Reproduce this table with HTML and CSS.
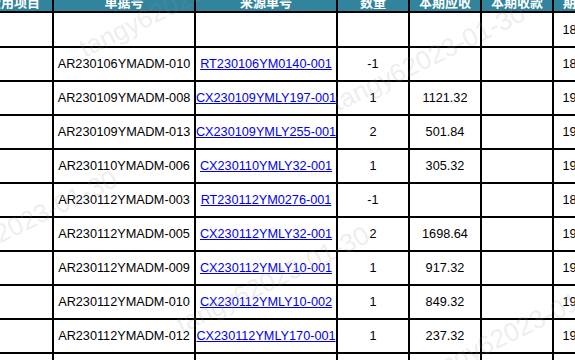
FILE: index.html
```html
<!DOCTYPE html>
<html lang="zh-CN">
<head>
<meta charset="utf-8">
<title>单据明细</title>
<link rel="stylesheet" href="styles.css">
</head>
<body>
<div class="sheet">
  <div class="grid">
    <div class="cell head">费用项目</div>
    <div class="cell head">单据号</div>
    <div class="cell head">来源单号</div>
    <div class="cell head">数量</div>
    <div class="cell head">本期应收</div>
    <div class="cell head">本期收款</div>
    <div class="cell head">期末余额</div>

    <div class="cell first"></div><div class="cell first"></div><div class="cell first"></div><div class="cell first"></div><div class="cell first"></div><div class="cell first"></div><div class="cell first">18962.40</div>

    <div class="cell"></div><div class="cell">AR230106YMADM-010</div><div class="cell"><a href="#">RT230106YM0140-001</a></div><div class="cell">-1</div><div class="cell"></div><div class="cell"></div><div class="cell">18451.20</div>

    <div class="cell"></div><div class="cell">AR230109YMADM-008</div><div class="cell"><a href="#">CX230109YMLY197-001</a></div><div class="cell">1</div><div class="cell">1121.32</div><div class="cell"></div><div class="cell">19572.52</div>

    <div class="cell"></div><div class="cell">AR230109YMADM-013</div><div class="cell"><a href="#">CX230109YMLY255-001</a></div><div class="cell">2</div><div class="cell">501.84</div><div class="cell"></div><div class="cell">19674.36</div>

    <div class="cell"></div><div class="cell">AR230110YMADM-006</div><div class="cell"><a href="#">CX230110YMLY32-001</a></div><div class="cell">1</div><div class="cell">305.32</div><div class="cell"></div><div class="cell">19679.68</div>

    <div class="cell"></div><div class="cell">AR230112YMADM-003</div><div class="cell"><a href="#">RT230112YM0276-001</a></div><div class="cell">-1</div><div class="cell"></div><div class="cell"></div><div class="cell">18979.68</div>

    <div class="cell"></div><div class="cell">AR230112YMADM-005</div><div class="cell"><a href="#">CX230112YMLY32-001</a></div><div class="cell">2</div><div class="cell">1698.64</div><div class="cell"></div><div class="cell">19178.32</div>

    <div class="cell"></div><div class="cell">AR230112YMADM-009</div><div class="cell"><a href="#">CX230112YMLY10-001</a></div><div class="cell">1</div><div class="cell">917.32</div><div class="cell"></div><div class="cell">19095.64</div>

    <div class="cell"></div><div class="cell">AR230112YMADM-010</div><div class="cell"><a href="#">CX230112YMLY10-002</a></div><div class="cell">1</div><div class="cell">849.32</div><div class="cell"></div><div class="cell">19944.96</div>

    <div class="cell"></div><div class="cell">AR230112YMADM-012</div><div class="cell"><a href="#">CX230112YMLY170-001</a></div><div class="cell">1</div><div class="cell">237.32</div><div class="cell"></div><div class="cell">19182.28</div>

    <div class="cell"></div><div class="cell"></div><div class="cell"></div><div class="cell"></div><div class="cell"></div><div class="cell"></div><div class="cell"></div>
  </div>

  <div class="wm wm-a">tangy62023-01-30</div>
  <div class="wm wm-b">tangy62023-01-30</div>
  <div class="wm wm-c">tangy62023-01-30</div>
  <div class="wm wm-d">tangy62023-01-30</div>
  <div class="wm wm-e">tangy62023-01-30</div>
</div>
</body>
</html>
```

FILE: styles.css
```css
html, body {
  margin: 0;
  padding: 0;
}

body {
  background: #fff;
  color: #000;
  font-family: "Liberation Sans", "Noto Sans CJK SC", sans-serif;
  font-size: 12.7px;
}

.sheet {
  position: relative;
  width: 575px;
  height: 360px;
  overflow: hidden;
}

.grid {
  display: grid;
  grid-template-columns: 78px 142px 142px 72px 72px 72px 72px;
  grid-template-rows: 21px 35px repeat(10, 34px);
  width: max-content;
  margin: -8px 0 0 -24px;
}

.cell {
  box-sizing: border-box;
  border-right: 2px solid #000;
  border-bottom: 2px solid #000;
  display: flex;
  align-items: center;
  justify-content: center;
  white-space: nowrap;
  overflow: hidden;
}

.head {
  background: #31849b;
  color: #fff;
  font-family: "Noto Sans CJK SC", sans-serif;
  font-weight: bold;
  font-size: 13px;
}

.cell a {
  color: #0000ee;
  text-decoration: underline;
}

.wm {
  position: absolute;
  font-family: "Liberation Sans", sans-serif;
  font-size: 26px;
  line-height: 1;
  color: rgba(150, 150, 150, 0.18);
  white-space: nowrap;
  transform-origin: 0 0;
  transform: rotate(-26deg);
  pointer-events: none;
}

.wm-e { left: 75px;  top: 38px; }
.wm-d { left: 328px; top: 92px; }
.wm-c { left: -80px; top: 258px; }
.wm-a { left: 172px; top: 314px; }
.wm-b { left: 416px; top: 364px; }
```
